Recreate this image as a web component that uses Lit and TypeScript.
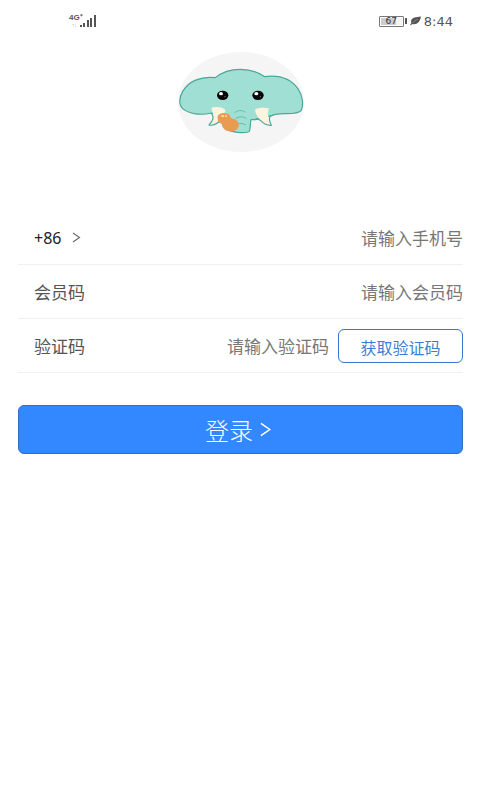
import { LitElement, html, css, svg } from "lit";
import { customElement, property } from "lit/decorators.js";

@customElement("status-bar")
class StatusBar extends LitElement {
  static styles = css`
    :host {
      display: flex;
      justify-content: space-between;
      align-items: center;
      height: 42px;
      padding: 0 27px 0 69px;
      color: #555;
      font-family: "DejaVu Sans", sans-serif;
    }
    svg { display: block; }
    .signal, .right { display: flex; align-items: center; }
    .net { font: bold 8px/8px "Liberation Sans", sans-serif; width: 11px; white-space: nowrap; }
    .net .updown { display: block; padding-left: 3px; font-size: 5px; line-height: 6px; color: #aaa; }
    .battery {
      box-sizing: border-box;
      width: 25px;
      height: 11px;
      border: 1px solid #777;
      border-radius: 1px;
      background: linear-gradient(90deg, #ccc 68%, #f4f4f4 68%);
      box-shadow: inset 0 0 0 1px #fff;
      font-size: 9px;
      line-height: 9px;
      text-align: center;
      color: #333;
    }
    .cap { width: 2px; height: 6px; margin-left: 1px; background: #555; }
    .leaf { margin-left: 3px; }
    .time { margin-left: 3px; font-size: 13px; line-height: 16px; padding-top: 2px; }
  `;
  render() {
    return html`
      <div class="signal">
        <div class="net">4G⁺<span class="updown">↑↓</span></div>
        <svg width="16" height="12" viewBox="0 0 16 12" fill="#555" aria-hidden="true">
          <rect x="0" y="10" width="2" height="2" /><rect x="3" y="8" width="2" height="4" />
          <rect x="7" y="5" width="2" height="7" /><rect x="10" y="3" width="2" height="9" />
          <rect x="14" y="0" width="2" height="12" />
        </svg>
      </div>
      <div class="right">
        <div class="battery">67</div>
        <div class="cap"></div>
        <svg class="leaf" width="11" height="10" viewBox="0 0 11 10" aria-hidden="true">
          <path d="M11 0.5C6 1 2 1.500 1.200 4.500C0.800 6 1.300 7 1.300 7L0 9L1 9.300L2.200 8C7 9 10 6 11 0.500Z" fill="#555" />
          <path d="M2 7.300C4 5 6 4 8 3.200" stroke="#aaa" stroke-width=".5" fill="none" />
        </svg>
        <div class="time">8:44</div>
      </div>
    `;
  }
}

@customElement("elephant-logo")
class ElephantLogo extends LitElement {
  static styles = css`
    :host { display: block; }
    svg { display: block; }
  `;
  private eye(cx: number) {
    return svg`
      <ellipse cx=${cx} cy="154" rx="17" ry="14" fill="#050505" />
      <ellipse cx=${cx - 5} cy="149" rx="6" ry="5" fill="#fff" />
      <circle cx=${cx + 7} cy="158" r="2" fill="#777" />`;
  }
  render() {
    return html`
      <svg width="126" height="100" viewBox="24 24 378 300" role="img" aria-label="Logo">
        <ellipse cx="213" cy="174" rx="189" ry="150" fill="#f5f5f5" />
        <g stroke="#4aa896" stroke-width="3.500" stroke-linejoin="round" stroke-linecap="round">
          <path fill="#a0e0d4" d="M136 101C158 83 184 76 211 76C240 76 264 84 284 98C330 92 364 105 385 136C398 155 401 182 394 199C386 210 362 209 342 209C326 209 316 210 307 214L256 227L243 227C240 240 242 251 238 262C232 267 205 267 190 263C170 262 158 250 157 238L150 212L124 207C94 215 56 210 38 194C26 183 27 160 38 142C56 112 91 96 136 101Z" />
          <path fill="#fdf4df" stroke="none" d="M124 192C138 187 158 189 166 198C164 212 151 229 135 239C126 244 121 245 117 244C125 237 131 225 130 214C130 206 125 200 124 192Z" />
          <path fill="none" d="M124 209C134 218 129 230 117 243C130 246 144 237 153 228" />
          <path fill="#fdf4df" stroke="none" d="M255 197C263 191 282 190 297 193C292 207 293 222 304 244C291 244 278 237 269 225C261 216 256 207 255 197Z" />
          <path fill="none" d="M258 224C265 226 268 226 272 230C280 238 292 245 304 244C297 230 294 217 309 213" />
          <path fill="none" stroke-width="2" d="M195 206C203 198 215 197 225 204M197 224C208 216 221 217 229 224M204 240C212 236 220 238 227 243" />
        </g>
        <path fill="#e99b52" d="M143 224C140 209 158 203 174 209C182 213 180 222 188 224C201 226 208 235 206 247C203 260 187 265 174 261C162 258 156 249 157 240C149 239 144 234 143 224Z" />
        <ellipse cx="158" cy="216" rx="5" ry="3" fill="#ffe09b" />
        <ellipse cx="168" cy="216" rx="3" ry="3" fill="#ffe09b" />
        ${this.eye(158)}${this.eye(264)}
      </svg>
    `;
  }
}

@customElement("chevron-right")
class ChevronRight extends LitElement {
  @property({ type: Number }) size = 10;
  static styles = css`
    :host, svg { display: block; }
  `;
  render() {
    return html`<svg width=${this.size} height=${this.size + 1} viewBox="0 0 10 11" fill="none" stroke="currentColor" stroke-width="1.1" aria-hidden="true">
      <path d="M2 1L8.500 5.500L2 10" />
    </svg>`;
  }
}

@customElement("app-root")
class AppRoot extends LitElement {
  static styles = css`
    :host {
      display: block;
      min-height: 100vh;
      background: #fff;
      font-family: "Noto Sans CJK SC", sans-serif;
      font-size: 17px;
      line-height: 24px;
      color: #555;
    }
    .logo { display: flex; justify-content: center; padding: 10px 0 59px 2px; }
    form { margin: 0 17px 0 18px; }
    .row {
      display: flex;
      align-items: center;
      box-sizing: border-box;
      height: 54px;
      padding-left: 16px;
      border-bottom: 1px solid #f0f0f0;
    }
    .row input {
      flex: 1;
      min-width: 0;
      height: 32px;
      padding: 0;
      border: 0;
      outline: 0;
      background: none;
      text-align: right;
      font: inherit;
      color: #333;
    }
    .row input::placeholder { color: #777; opacity: 1; }
    button { font: inherit; cursor: pointer; }
    .code {
      display: flex;
      align-items: center;
      gap: 10px;
      padding: 0;
      border: 0;
      background: none;
      color: #222;
      font-family: "Noto Sans", sans-serif;
      font-size: 16px;
    }
    .code chevron-right { color: #666; }
    .send {
      box-sizing: border-box;
      width: 125px;
      height: 34px;
      margin-left: 9px;
      padding: 2px 0 0;
      border: 1px solid #3478d0;
      border-radius: 6px;
      background: #fff;
      color: #3a7fd5;
      font-size: 16px;
    }
    .login {
      display: flex;
      align-items: center;
      justify-content: center;
      gap: 5px;
      box-sizing: border-box;
      width: 100%;
      height: 49px;
      margin-top: 32px;
      padding: 0 4px 0 0;
      border: 1px solid #2f6fc8;
      border-radius: 6px;
      background: #3388ff;
      color: #fff;
      font-size: 24px;
      font-weight: 300;
    }
  `;
  render() {
    return html`
      <status-bar></status-bar>
      <div class="logo"><elephant-logo></elephant-logo></div>
      <form @submit=${(e: Event) => e.preventDefault()}>
        <div class="row">
          <button class="code" type="button">+86 <chevron-right></chevron-right></button>
          <input type="tel" aria-label="手机号" placeholder="请输入手机号" />
        </div>
        <div class="row">
          <label for="member">会员码</label>
          <input id="member" type="text" placeholder="请输入会员码" />
        </div>
        <div class="row">
          <label for="verify">验证码</label>
          <input id="verify" type="text" placeholder="请输入验证码" />
          <button class="send" type="button">获取验证码</button>
        </div>
        <button class="login" type="submit">登录 <chevron-right .size=${14}></chevron-right></button>
      </form>
    `;
  }
}
